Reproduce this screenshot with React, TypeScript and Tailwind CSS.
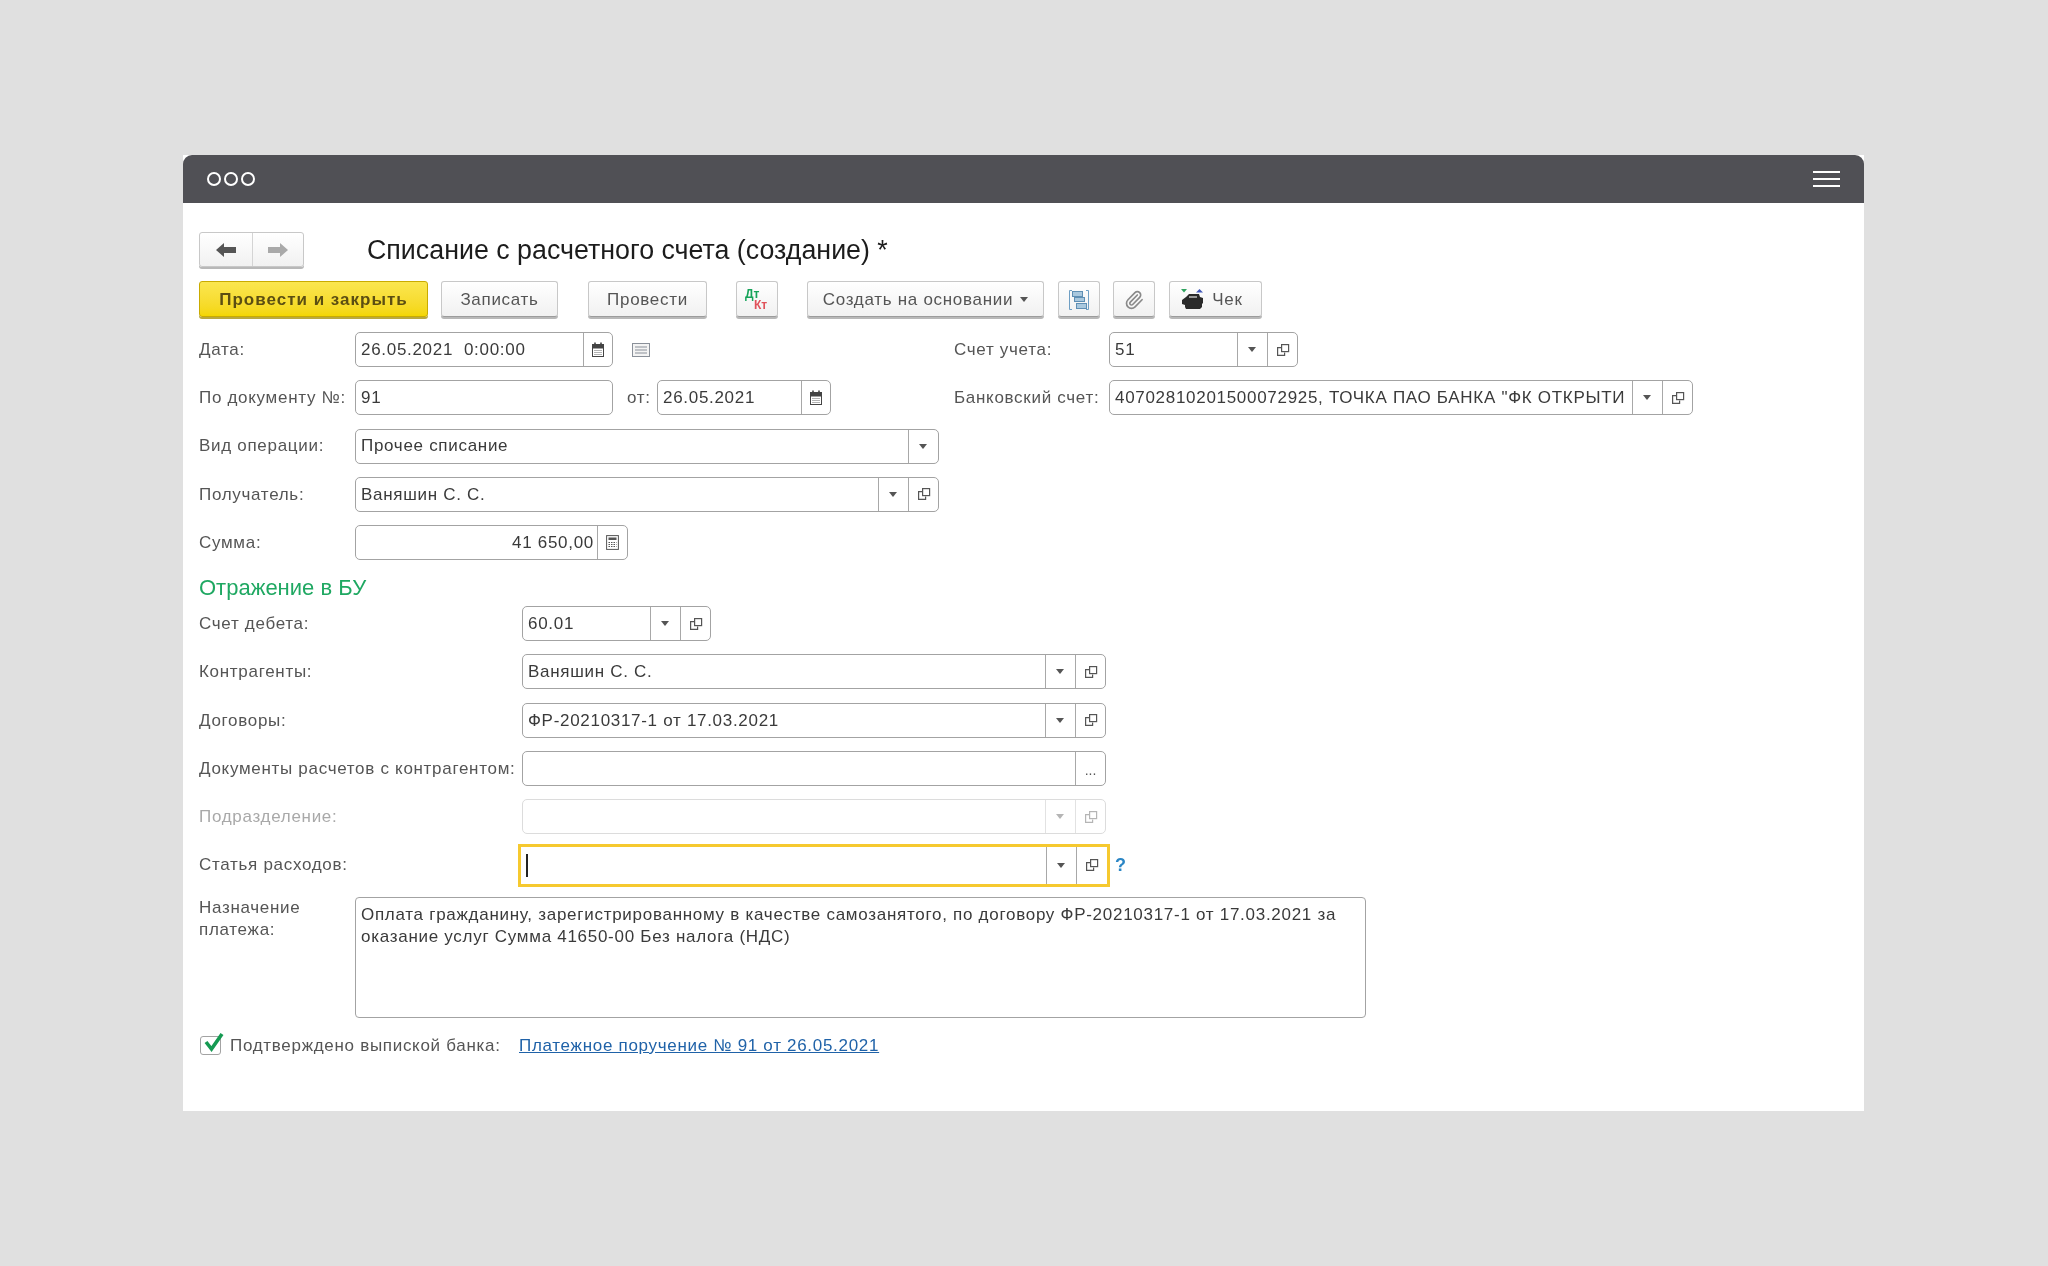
import { Paperclip } from "lucide-react";
import type { ReactNode } from "react";

const font = { fontFamily: '"Liberation Sans", Arial, sans-serif' };

function Caret({ light }: { light?: boolean }) {
  return (
    <svg width="8" height="5" viewBox="0 0 8 5">
      <path d="M0 0h8L4 5z" fill={light ? "#b5b5b5" : "#555"} />
    </svg>
  );
}

function OpenIcon({ light }: { light?: boolean }) {
  const c = light ? "#b5b5b5" : "#555";
  return (
    <svg width="14" height="14" viewBox="0 0 14 14" fill="none" stroke={c} strokeWidth="1.2">
      <rect x="5.6" y="1.6" width="7" height="7" />
      <path d="M5 4.6H1.6v7.8h7V9.4" />
    </svg>
  );
}

function CalendarIcon() {
  return (
    <svg width="12" height="15" viewBox="0 0 12 15">
      <rect x="0.5" y="2.500" width="11" height="12" fill="#fff" stroke="#444" />
      <rect x="0.5" y="2.500" width="11" height="4" fill="#444" />
      <path d="M3 0.5v3.500M9 0.5v3.500" stroke="#444" strokeWidth="1.6" />
      <path d="M2.500 8.500h7M2.500 10.500h7M2.500 12.500h7" stroke="#666" strokeDasharray="1 1" />
    </svg>
  );
}

function CalcIcon() {
  return (
    <svg width="13" height="15" viewBox="0 0 13 15">
      <rect x="0.6" y="0.6" width="11.8" height="13.8" fill="#fff" stroke="#555" />
      <rect x="2.500" y="2.500" width="8" height="2.500" fill="#555" />
      <path d="M2.500 7.500h8M2.500 9.500h8M2.500 11.500h8" stroke="#555" strokeDasharray="1.500 1" />
    </svg>
  );
}

function Cell({ children, w }: { children: ReactNode; w: string }) {
  return <div className={`flex h-full items-center justify-center border-l border-[#a8a8a8] ${w}`}>{children}</div>;
}

function Field({
  w,
  value,
  right,
  kind = "choice",
  disabled,
}: {
  w: string;
  value?: string;
  right?: boolean;
  kind?: "plain" | "date" | "combo" | "choice" | "calc" | "dots";
  disabled?: boolean;
}) {
  return (
    <div
      className={`flex h-[35px] shrink-0 items-center rounded-[5px] border bg-white ${w} ${
        disabled ? "border-[#dcdcdc]" : "border-[#a3a3a3]"
      }`}
    >
      <div
        className={`min-w-0 flex-1 whitespace-pre pl-[5px] pr-[3px] text-[17px] tracking-[0.7px] text-[#3a3a3a] ${
          right ? "text-right" : ""
        }`}
      >
        {value}
      </div>
      {kind === "date" && (
        <Cell w="w-[29px]">
          <CalendarIcon />
        </Cell>
      )}
      {kind === "calc" && (
        <Cell w="w-[30px]">
          <CalcIcon />
        </Cell>
      )}
      {kind === "combo" && (
        <Cell w="w-[30px] pr-[2px]">
          <Caret />
        </Cell>
      )}
      {kind === "choice" && (
        <>
          <Cell w={`w-[30px] pr-[2px] ${disabled ? "!border-[#e2e2e2]" : ""}`}>
            <Caret light={disabled} />
          </Cell>
          <Cell w={`w-[30px] ${disabled ? "!border-[#e2e2e2]" : ""}`}>
            <OpenIcon light={disabled} />
          </Cell>
        </>
      )}
      {kind === "dots" && (
        <Cell w="w-[30px]">
          <span className="pt-[4px] text-[14px] text-[#555]">...</span>
        </Cell>
      )}
    </div>
  );
}

function Label({ w, children, muted }: { w: string; children: ReactNode; muted?: boolean }) {
  return (
    <div className={`shrink-0 whitespace-nowrap text-[17px] tracking-[0.7px] ${w} ${muted ? "text-[#a9a9a9]" : "text-[#555]"}`}>
      {children}
    </div>
  );
}

function Btn({ w, children, ml }: { w: string; children: ReactNode; ml: string }) {
  return (
    <div
      className={`flex h-[36px] shrink-0 items-center justify-center rounded-[3px] border border-[#c8c8c8] border-b-[#9c9c9c] bg-gradient-to-b from-white to-[#f1f1f1] pt-[1px] text-[17px] tracking-[0.7px] text-[#555] shadow-[0_2px_0_#b8b8b8] ${w} ${ml}`}
    >
      {children}
    </div>
  );
}

export default function App() {
  return (
    <div className="min-h-screen bg-[#e0e0e0] pl-[183px] pt-[155px]" style={font}>
      <div className="w-[1681px] bg-white blur-[0.4px]">
        <div className="flex h-[48px] items-center justify-between rounded-t-[9px] bg-[#505055] pl-[24px] pr-[24px]">
          <div className="flex gap-[3px]">
            <span className="h-[14px] w-[14px] rounded-full border-2 border-white" />
            <span className="h-[14px] w-[14px] rounded-full border-2 border-white" />
            <span className="h-[14px] w-[14px] rounded-full border-2 border-white" />
          </div>
          <div className="flex w-[27px] flex-col gap-[5px]">
            <span className="h-[2px] bg-white" />
            <span className="h-[2px] bg-white" />
            <span className="h-[2px] bg-white" />
          </div>
        </div>

        <div className="h-[908px] pl-[16px] pt-[29px]">
          <div className="flex h-[35px] items-center">
            <div className="flex h-[35px] w-[105px] rounded-[3px] border border-[#c8c8c8] bg-gradient-to-b from-white to-[#f1f1f1] shadow-[0_2px_0_#b8b8b8]">
              <div className="flex w-[53px] items-center justify-center border-r border-[#d4d4d4]">
                <svg width="22" height="16" viewBox="0 0 22 16">
                  <path d="M1 8l8-7v4h12v6H9v4z" fill="#555" />
                </svg>
              </div>
              <div className="flex flex-1 items-center justify-center">
                <svg width="22" height="16" viewBox="0 0 22 16">
                  <path d="M21 8l-8-7v4H1v6h12v4z" fill="#a9a9a9" />
                </svg>
              </div>
            </div>
            <div className="ml-[63px] pt-[1px] text-[26.8px] text-[#1c1c1c]">Списание с расчетного счета (создание) *</div>
          </div>

          <div className="mt-[14px] flex">
            <div className="flex h-[36px] w-[229px] shrink-0 items-center justify-center rounded-[3px] border border-[#c9ab00] bg-gradient-to-b from-[#fbe64e] to-[#f4d600] pt-[1px] text-[17px] font-bold tracking-[1px] text-[#5b4e12] shadow-[0_2px_0_#b9a840]">
              Провести и закрыть
            </div>
            <Btn w="w-[117px]" ml="ml-[13px]">Записать</Btn>
            <Btn w="w-[119px]" ml="ml-[30px]">Провести</Btn>
            <Btn w="w-[42px]" ml="ml-[29px]">
              <div className="w-[24px] text-[12px] font-bold leading-[11px] tracking-normal">
                <div className="text-[#17a45a]">Дт</div>
                <div className="pl-[9px] text-[#e0525a]">Кт</div>
              </div>
            </Btn>
            <Btn w="w-[237px]" ml="ml-[29px]">
              Создать на основании
              <span className="ml-[7px] flex">
                <Caret />
              </span>
            </Btn>
            <Btn w="w-[42px]" ml="ml-[14px]">
              <svg width="22" height="22" viewBox="0 0 22 22" fill="none">
                <path d="M4 1.500H1.500v19H4M18 1.500h2.500v19H18" stroke="#6f9fc4" />
                <rect x="4.500" y="2.500" width="10" height="5" fill="#a9c8de" stroke="#5f8fb4" />
                <rect x="6.500" y="8.500" width="10" height="4" fill="#a9c8de" stroke="#5f8fb4" />
                <rect x="8.500" y="14.500" width="10" height="5" fill="#a9c8de" stroke="#5f8fb4" />
              </svg>
            </Btn>
            <Btn w="w-[42px]" ml="ml-[13px]">
              <Paperclip size={20} strokeWidth={2} color="#8a8a8a" />
            </Btn>
            <Btn w="w-[93px]" ml="ml-[14px]">
              <div className="flex items-center pr-[7px]">
                <svg width="23" height="23" viewBox="0 0 23 23" className="mr-[8px]">
                  <path d="M0 1h6L3 4.500z" fill="#2fa35f" />
                  <path d="M15 4.500h7L18.500 1z" fill="#3f56b8" />
                  <path d="M1 12l4-3 3-3h10l1 3 3 1v5l-1 1v3l-2 2H5l-1-2v-2l-3-1z" fill="#2a2a2a" />
                  <path d="M8 8h8v2H8z" fill="#9a9a9a" />
                </svg>
                Чек
              </div>
            </Btn>
          </div>

          <div className="mt-[15px] flex flex-col gap-[13.3px]">
            <div className="flex items-center">
              <div className="flex w-[755px] shrink-0 items-center">
                <Label w="w-[156px]">Дата:</Label>
                <Field w="w-[258px]" value="26.05.2021  0:00:00" kind="date" />
                <svg width="18" height="14" viewBox="0 0 18 14" className="ml-[19px]" fill="none" stroke="#8a9099">
                  <rect x="0.5" y="0.5" width="17" height="13" fill="#f4f4f4" />
                  <path d="M3 4h12M3 7h12M3 10h12" />
                </svg>
              </div>
              <Label w="w-[155px]">Счет учета:</Label>
              <Field w="w-[189px]" value="51" />
            </div>

            <div className="flex items-center">
              <div className="flex w-[755px] shrink-0 items-center">
                <Label w="w-[156px]">По документу №:</Label>
                <Field w="w-[258px]" value="91" kind="plain" />
                <Label w="w-[44px]">
                  <span className="pl-[14px]">от:</span>
                </Label>
                <Field w="w-[174px]" value="26.05.2021" kind="date" />
              </div>
              <Label w="w-[155px]">Банковский счет:</Label>
              <Field w="w-[584px]" value={'40702810201500072925, ТОЧКА ПАО БАНКА "ФК ОТКРЫТИ'} />
            </div>

            <div className="flex items-center">
              <Label w="w-[156px]">Вид операции:</Label>
              <Field w="w-[584px]" value="Прочее списание" kind="combo" />
            </div>

            <div className="flex items-center">
              <Label w="w-[156px]">Получатель:</Label>
              <Field w="w-[584px]" value="Ваняшин С. С." />
            </div>

            <div className="flex items-center">
              <Label w="w-[156px]">Сумма:</Label>
              <Field w="w-[273px]" value="41 650,00" kind="calc" right />
            </div>
          </div>

          <div className="flex h-[46px] items-center pt-[8px] text-[22px] text-[#1fa862]">Отражение в БУ</div>

          <div className="flex flex-col gap-[13.3px]">
            <div className="flex items-center">
              <Label w="w-[323px]">Счет дебета:</Label>
              <Field w="w-[189px]" value="60.01" />
            </div>
            <div className="flex items-center">
              <Label w="w-[323px]">Контрагенты:</Label>
              <Field w="w-[584px]" value="Ваняшин С. С." />
            </div>
            <div className="flex items-center">
              <Label w="w-[323px]">Договоры:</Label>
              <Field w="w-[584px]" value="ФР-20210317-1 от 17.03.2021" />
            </div>
            <div className="flex items-center">
              <Label w="w-[323px]">Документы расчетов с контрагентом:</Label>
              <Field w="w-[584px]" kind="dots" />
            </div>
            <div className="flex items-center">
              <Label w="w-[323px]" muted>Подразделение:</Label>
              <Field w="w-[584px]" disabled />
            </div>
            <div className="flex items-center">
              <Label w="w-[319px]">Статья расходов:</Label>
              <div className="-my-[4px] flex h-[43px] w-[592px] shrink-0 items-center border-[3px] border-[#f6c92f] bg-white">
                <div className="flex-1 pl-[5px]">
                  <div className="h-[23px] w-[2px] bg-[#222]" />
                </div>
                <Cell w="w-[30px] pr-[2px]">
                  <Caret />
                </Cell>
                <Cell w="w-[31px]">
                  <OpenIcon />
                </Cell>
              </div>
              <span className="ml-[5px] text-[18px] font-bold text-[#2b86c5]">?</span>
            </div>
          </div>

          <div className="mt-[14px] flex">
            <div className="w-[156px] shrink-0 text-[17px] leading-[22px] tracking-[0.7px] text-[#555]">
              Назначение
              <br />
              платежа:
            </div>
            <div className="h-[121px] w-[1011px] rounded-[4px] border border-[#a3a3a3] px-[5px] pt-[6px] text-[17px] leading-[22px] tracking-[0.72px] text-[#3a3a3a]">
              Оплата гражданину, зарегистрированному в качестве самозанятого, по договору ФР-20210317-1 от 17.03.2021 за
              <br />
              оказание услуг Сумма 41650-00 Без налога (НДС)
            </div>
          </div>

          <div className="mt-[18px] flex h-[20px] items-center">
            <div className="relative ml-[1px] h-[19px] w-[21px] rounded-[3px] border border-[#a3a3a3] bg-white">
              <svg width="24" height="24" viewBox="0 0 24 24" className="absolute -top-[7px] left-0">
                <path d="M5 12l5.500 7L21 4" fill="none" stroke="#159a52" strokeWidth="3.6" />
              </svg>
            </div>
            <span className="ml-[9px] w-[289px] text-[17px] tracking-[0.7px] text-[#555]">Подтверждено выпиской банка:</span>
            <span className="text-[17px] tracking-[0.7px] text-[#1f62a8] underline">Платежное поручение № 91 от 26.05.2021</span>
          </div>
        </div>
      </div>
    </div>
  );
}
